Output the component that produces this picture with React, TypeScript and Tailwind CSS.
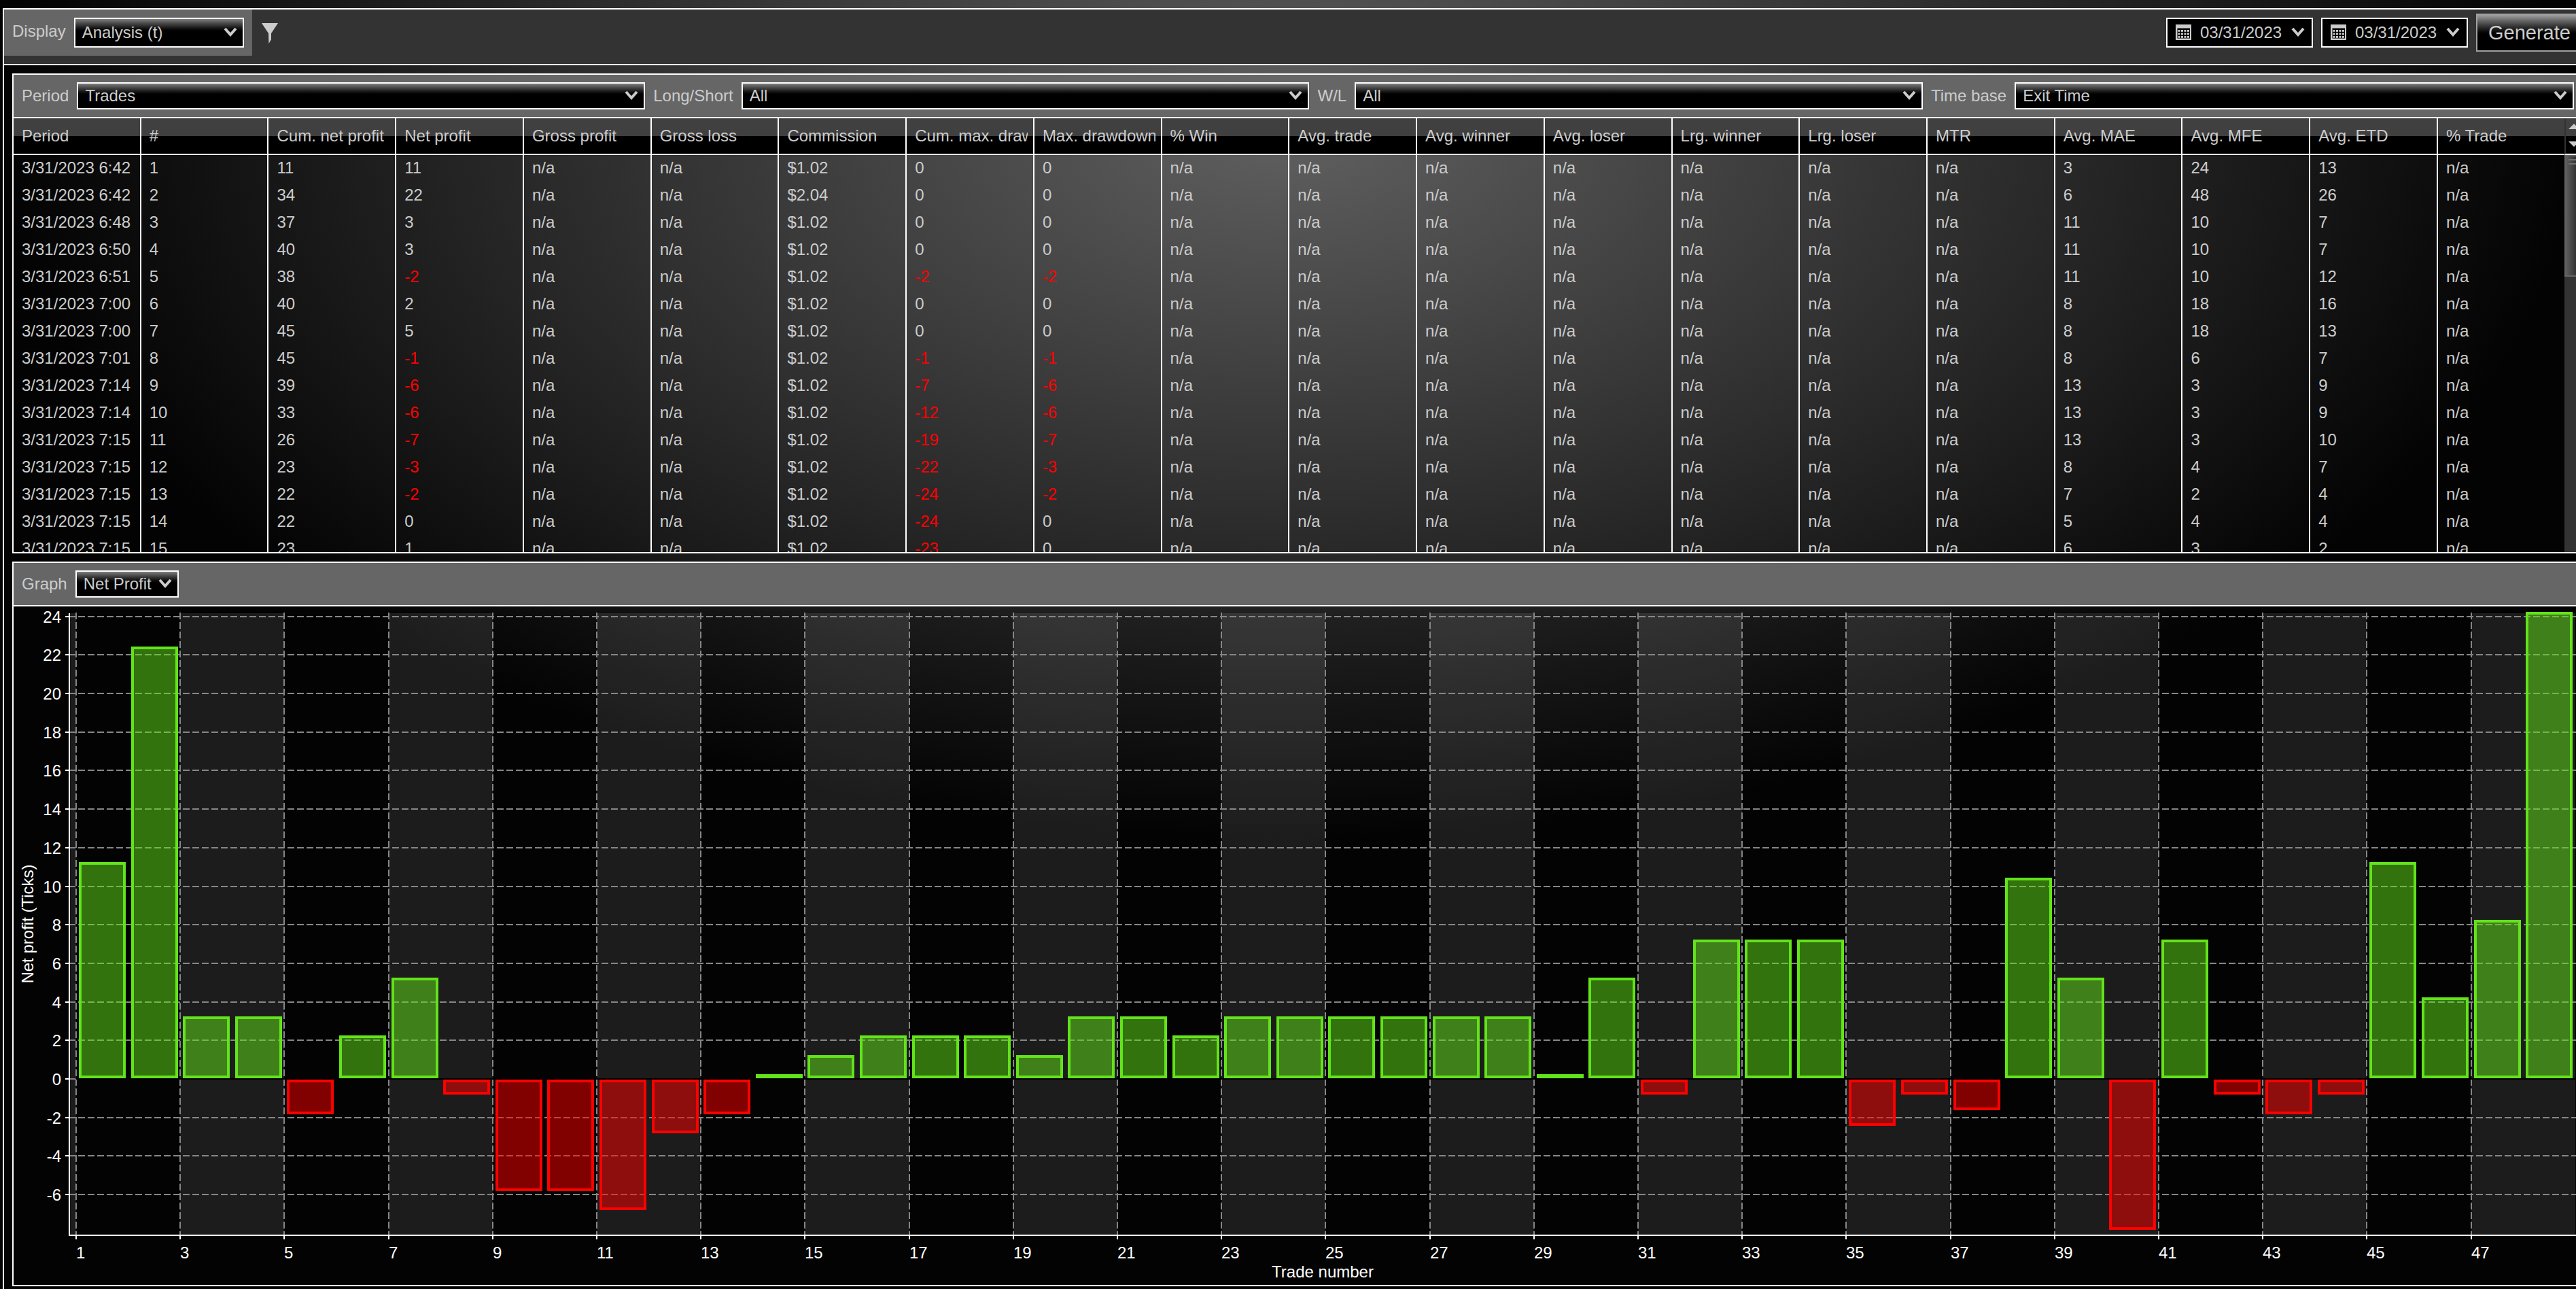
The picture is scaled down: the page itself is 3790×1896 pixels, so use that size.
import React from 'react';
import clsx from 'clsx';

const columns = [
  'Period', '#', 'Cum. net profit', 'Net profit', 'Gross profit', 'Gross loss', 'Commission',
  'Cum. max. drawdown', 'Max. drawdown', '% Win', 'Avg. trade', 'Avg. winner', 'Avg. loser',
  'Lrg. winner', 'Lrg. loser', 'MTR', 'Avg. MAE', 'Avg. MFE', 'Avg. ETD', '% Trade',
];

type Trade = {
  time: string;
  cumProfit: number;
  profit: number;
  commission: string;
  cumDrawdown: number;
  drawdown: number;
  mae: number;
  mfe: number;
  etd: number;
};

const trades: Trade[] = [
  { time: '6:42', cumProfit: 11, profit: 11, commission: '$1.02', cumDrawdown: 0, drawdown: 0, mae: 3, mfe: 24, etd: 13 },
  { time: '6:42', cumProfit: 34, profit: 22, commission: '$2.04', cumDrawdown: 0, drawdown: 0, mae: 6, mfe: 48, etd: 26 },
  { time: '6:48', cumProfit: 37, profit: 3, commission: '$1.02', cumDrawdown: 0, drawdown: 0, mae: 11, mfe: 10, etd: 7 },
  { time: '6:50', cumProfit: 40, profit: 3, commission: '$1.02', cumDrawdown: 0, drawdown: 0, mae: 11, mfe: 10, etd: 7 },
  { time: '6:51', cumProfit: 38, profit: -2, commission: '$1.02', cumDrawdown: -2, drawdown: -2, mae: 11, mfe: 10, etd: 12 },
  { time: '7:00', cumProfit: 40, profit: 2, commission: '$1.02', cumDrawdown: 0, drawdown: 0, mae: 8, mfe: 18, etd: 16 },
  { time: '7:00', cumProfit: 45, profit: 5, commission: '$1.02', cumDrawdown: 0, drawdown: 0, mae: 8, mfe: 18, etd: 13 },
  { time: '7:01', cumProfit: 45, profit: -1, commission: '$1.02', cumDrawdown: -1, drawdown: -1, mae: 8, mfe: 6, etd: 7 },
  { time: '7:14', cumProfit: 39, profit: -6, commission: '$1.02', cumDrawdown: -7, drawdown: -6, mae: 13, mfe: 3, etd: 9 },
  { time: '7:14', cumProfit: 33, profit: -6, commission: '$1.02', cumDrawdown: -12, drawdown: -6, mae: 13, mfe: 3, etd: 9 },
  { time: '7:15', cumProfit: 26, profit: -7, commission: '$1.02', cumDrawdown: -19, drawdown: -7, mae: 13, mfe: 3, etd: 10 },
  { time: '7:15', cumProfit: 23, profit: -3, commission: '$1.02', cumDrawdown: -22, drawdown: -3, mae: 8, mfe: 4, etd: 7 },
  { time: '7:15', cumProfit: 22, profit: -2, commission: '$1.02', cumDrawdown: -24, drawdown: -2, mae: 7, mfe: 2, etd: 4 },
  { time: '7:15', cumProfit: 22, profit: 0, commission: '$1.02', cumDrawdown: -24, drawdown: 0, mae: 5, mfe: 4, etd: 4 },
  { time: '7:15', cumProfit: 23, profit: 1, commission: '$1.02', cumDrawdown: -23, drawdown: 0, mae: 6, mfe: 3, etd: 2 },
];

const profits = [
  11, 22.2, 3, 3, -2, 2, 5, -1, -6, -6, -7, -3, -2, 0, 1, 2, 2, 2, 1, 3, 3, 2, 3, 3,
  3, 3, 3, 3, 0, 5, -1, 7, 7, 7, -2.6, -1, -1.8, 10.2, 5, -8, 7, -1, -2, -1, 11, 4, 8, 24,
];

const Chevron: React.FC<{ className?: string }> = ({ className }) => (
  <svg className={className} width="24" height="16" viewBox="0 0 24 16">
    <path d="M4 2 L12 11 L20 2" fill="none" stroke="#cccccc" strokeWidth="4" />
  </svg>
);

type SelectProps = {
  id: string;
  value: string;
  className?: string;
  selectClassName?: string;
};

const Select: React.FC<SelectProps> = ({ id, value, className, selectClassName }) => (
  <div className={clsx('relative', className)}>
    <select
      id={id}
      className={clsx(
        'block w-full appearance-none rounded-none border-2 border-white bg-linear-to-b from-[#808080] to-black to-50% pl-2.5 text-[#cccccc] outline-none',
        selectClassName ?? 'h-10'
      )}
    >
      <option>{value}</option>
    </select>
    <Chevron className="pointer-events-none absolute right-2 top-1/2 -translate-y-1/2" />
  </div>
);

const DatePicker: React.FC<{ label: string }> = ({ label }) => (
  <button aria-label={label} className="flex h-11 w-[216px] items-center border-2 border-white bg-black pl-3 pr-2">
    <svg width="24" height="24" viewBox="0 0 24 24" fill="#cccccc">
      <path d="M0 0h23v23H0z" />
      <path d="M2.5 5.5h18.5v15H2.5z" fill="#000000" />
      {[8, 12.4, 17].map((y) =>
        [3.5, 8, 12.5, 17].map((x) => <rect key={`${x}-${y}`} x={x} y={y} width="3" height="2.8" />)
      )}
    </svg>
    <span className="ml-3">03/31/2023</span>
    <Chevron className="ml-auto" />
  </button>
);

const TradeTable: React.FC = () => (
  <div className="flex h-[638px] overflow-hidden">
    <div className="min-w-0 flex-1">
      <table className="w-full table-fixed border-separate border-spacing-0 text-left">
        <colgroup>
          {columns.map((name) => (
            <col key={name} className="last:w-[186px]" />
          ))}
        </colgroup>
        <thead>
          <tr>
            {columns.map((name) => (
              <th
                key={name}
                className="h-[54px] border-b border-r-2 border-white bg-linear-to-b from-[#404040] from-[26px] to-black to-[26px] p-0 pb-0.5 pl-3 pr-2 font-normal shadow-[inset_0_-1px_0_#999999] last:border-r-0"
              >
                <div className="overflow-hidden whitespace-nowrap">{name}</div>
              </th>
            ))}
          </tr>
        </thead>
        <tbody>
          {trades.map((t, i) => {
            const cells = [
              `3/31/2023 ${t.time}`, i + 1, t.cumProfit, t.profit, 'n/a', 'n/a', t.commission, t.cumDrawdown, t.drawdown,
              'n/a', 'n/a', 'n/a', 'n/a', 'n/a', 'n/a', 'n/a', t.mae, t.mfe, t.etd, 'n/a',
            ];
            return (
              <tr key={i}>
                {cells.map((cell, c) => (
                  <td
                    key={c}
                    className={clsx(
                      'h-10 whitespace-nowrap border-r-2 border-white p-0 pb-0.5 pl-3 last:border-r-0',
                      typeof cell === 'number' && cell < 0 && 'text-[#ff0000]'
                    )}
                  >
                    {cell}
                  </td>
                ))}
              </tr>
            );
          })}
        </tbody>
      </table>
    </div>

    {/* Scrollbar */}
    <div className="flex w-[17px] flex-col bg-[#333333]">
      <div className="flex h-[54px] flex-col items-end gap-[18px] border-b-2 border-l-2 border-b-white border-l-[#333333] bg-linear-to-b from-[#404040] from-50% to-black to-50% pt-2">
        <svg width="11" height="8" viewBox="0 0 11 8"><path d="M0 8 L8 0 L16 8z" fill="#cccccc" /></svg>
        <svg width="11" height="8" viewBox="0 0 11 8"><path d="M0 0 L8 8 L16 0z" fill="#cccccc" /></svg>
      </div>
      <div className="h-[179px] border-y-2 border-[#666666] bg-linear-to-r from-[#666666] to-[#333333]">
        <div className="ml-1.5 mt-1 h-2 border-y-2 border-[#707070]" />
      </div>
    </div>
  </div>
);

// Chart geometry
const LEFT = 82;
const FIRST = 92;
const STEP = 76.6;
const TOP = 10;
const BOTTOM = 925;
const ZERO = 695;
const TICK = 28.35;

const xAt = (n: number) => Math.round(FIRST + (n - 1) * STEP);
const yAt = (v: number) => Math.round(ZERO - v * TICK);

const ProfitChart: React.FC = () => {
  const yTicks = Array.from({ length: 16 }, (_, i) => 24 - i * 2);
  const xTicks = Array.from({ length: 24 }, (_, i) => 1 + i * 2);

  return (
    <svg className="block h-auto w-full" viewBox="0 0 3770 998" fontSize="24" fill="#ffffff" role="img" aria-label="Net profit by trade number">
      {/* Alternating bands */}
      <rect x={LEFT} y={TOP} width={FIRST - LEFT} height={BOTTOM - TOP} fillOpacity="0.1" />
      {xTicks.filter((_, i) => i % 2).map((n) => (
        <rect key={n} x={xAt(n)} y={TOP} width={xAt(n + 2) - xAt(n)} height={BOTTOM - TOP} fillOpacity="0.1" />
      ))}

      {/* Grid */}
      <g stroke="#868686" strokeWidth="2" strokeDasharray="10 4">
        {yTicks.map((v) => (
          <line key={v} x1={LEFT - 1} x2="3770" y1={yAt(v)} y2={yAt(v)} />
        ))}
        {xTicks.map((n) => (
          <line key={n} x1={xAt(n)} x2={xAt(n)} y1={TOP - 1} y2={BOTTOM} />
        ))}
      </g>
      <rect x={FIRST} y={ZERO - 1} width="3678" height="2" fill="#000000" />

      {/* Bars */}
      {profits.map((v, i) => {
        const up = v >= 0;
        const top = up ? yAt(v) - 7 : ZERO + 1;
        const bottom = up ? ZERO - 1 : yAt(v) - 5;
        return (
          <rect
            key={i}
            x={xAt(i + 1) + 6}
            y={top + 2}
            width="65"
            height={bottom - top - 4}
            fill={up ? '#62e31a' : '#ff0000'}
            fillOpacity="0.5"
            stroke={up ? '#62e31a' : '#ff0000'}
            strokeWidth="4"
          />
        );
      })}

      {/* Axes */}
      <g stroke="#ffffff" strokeWidth="2">
        <line x1={LEFT} x2={LEFT} y1={TOP} y2={BOTTOM + 1} />
        <line x1={LEFT - 1} x2="3770" y1={BOTTOM} y2={BOTTOM} />
        {yTicks.map((v) => (
          <line key={v} x1={LEFT - 6} x2={LEFT} y1={yAt(v)} y2={yAt(v)} />
        ))}
        {xTicks.map((n) => (
          <line key={n} x1={xAt(n)} x2={xAt(n)} y1={BOTTOM} y2={BOTTOM + 6} />
        ))}
      </g>
      {yTicks.map((v) => (
        <text key={v} x="70" y={yAt(v) + 9} textAnchor="end">{v}</text>
      ))}
      {xTicks.map((n) => (
        <text key={n} x={xAt(n)} y="959">{n}</text>
      ))}
      <text x="1926" y="987" textAnchor="middle">Trade number</text>
      <text transform="translate(29 467) rotate(-90)" textAnchor="middle">Net profit (Ticks)</text>
    </svg>
  );
};

const App: React.FC = () => {
  return (
    <div className="min-h-screen overflow-hidden bg-[#030303] bg-[radial-gradient(50%_55%_at_50%_10%,#606060,#030303)] pl-1 pt-3 font-['Liberation_Sans',Arial,sans-serif] text-2xl leading-7 text-[#cccccc]">
      <div className="min-h-[1884px] border-l-2 border-t-2 border-white">
        {/* Toolbar */}
        <header className="flex h-[82px] items-start border-b-2 border-white bg-[#333333]">
          <div className="flex h-[68px] items-start bg-[#666666] px-3 pt-3">
            <label htmlFor="display" className="mr-3 mt-1.5">Display</label>
            <Select id="display" value="Analysis (t)" className="w-[250px]" selectClassName="h-11" />
          </div>
          <button aria-label="Filter" className="ml-3.5 mt-5">
            <svg width="24" height="30" viewBox="0 0 24 30"><path d="M0 0h24L14 15v9L10.5 30L10 15z" fill="#cccccc" /></svg>
          </button>
          <div className="ml-auto flex items-start gap-3 pt-1.5">
            <div className="flex gap-3 pt-1.5">
              <DatePicker label="Start date" />
              <DatePicker label="End date" />
            </div>
            <button className="h-14 w-[147px] border-2 border-r-0 border-[#a0a0a0] bg-linear-to-b from-[#a0a0a0] to-black to-60% pl-4 text-left text-[29px]">
              Generate
            </button>
          </div>
        </header>

        {/* Trades */}
        <section className="ml-3 mt-3 border-y-2 border-l-2 border-white">
          <div className="flex h-16 items-center gap-3 border-b-2 border-white bg-[#666666] pl-3 pr-[3px]">
            <label htmlFor="period">Period</label>
            <Select id="period" value="Trades" className="grow-[836] basis-0" />
            <label htmlFor="side">Long/Short</label>
            <Select id="side" value="All" className="grow-[836] basis-0" />
            <label htmlFor="wl">W/L</label>
            <Select id="wl" value="All" className="grow-[836] basis-0" />
            <label htmlFor="base">Time base</label>
            <Select id="base" value="Exit Time" className="grow-[823] basis-0" />
          </div>
          <TradeTable />
        </section>

        {/* Graph */}
        <section className="ml-3 mt-3 border-y-2 border-l-2 border-white">
          <div className="flex h-16 items-center gap-3 border-b-2 border-white bg-[#666666] pl-3">
            <label htmlFor="graph">Graph</label>
            <Select id="graph" value="Net Profit" className="w-[152px]" />
          </div>
          <ProfitChart />
        </section>
      </div>
    </div>
  );
};

export default App;
